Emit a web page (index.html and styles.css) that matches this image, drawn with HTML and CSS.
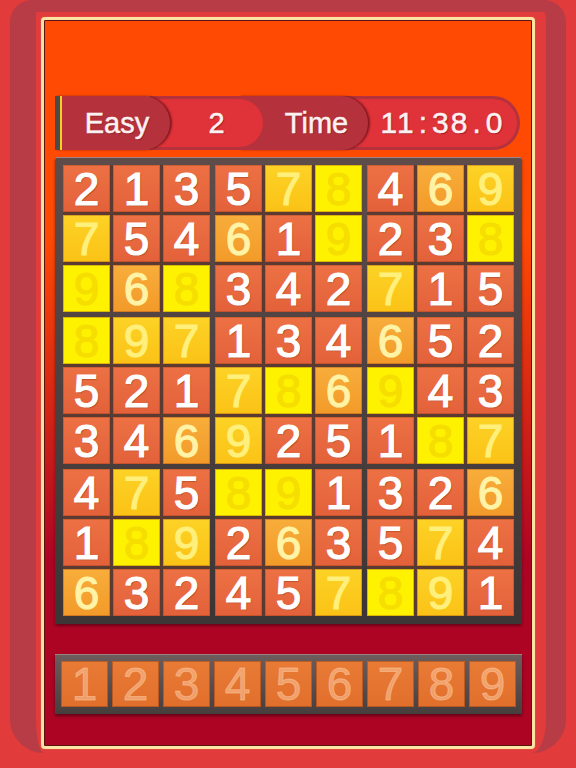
FILE: index.html
```html
<!DOCTYPE html>
<html>
<head>
<meta charset="utf-8">
<link rel="stylesheet" href="styles.css">
</head>
<body>
<div class="screen">
  <div class="ring">
    <div class="panel">
      <div class="infobar">
        <div class="seg label first">Easy</div>
        <div class="seg value v1">2</div>
        <div class="seg label second">Time</div>
        <div class="seg value v2">11<span class="sep">:</span>38<span class="sep">.</span>0</div>
      </div>
      <div class="board">
        <div class="block">
          <div class="cell w">2</div><div class="cell w">1</div><div class="cell w">3</div>
          <div class="cell g">7</div><div class="cell w">5</div><div class="cell w">4</div>
          <div class="cell y">9</div><div class="cell a">6</div><div class="cell y">8</div>
        </div>
        <div class="block">
          <div class="cell w">5</div><div class="cell g">7</div><div class="cell y">8</div>
          <div class="cell a">6</div><div class="cell w">1</div><div class="cell y">9</div>
          <div class="cell w">3</div><div class="cell w">4</div><div class="cell w">2</div>
        </div>
        <div class="block">
          <div class="cell w">4</div><div class="cell a">6</div><div class="cell g">9</div>
          <div class="cell w">2</div><div class="cell w">3</div><div class="cell y">8</div>
          <div class="cell g">7</div><div class="cell w">1</div><div class="cell w">5</div>
        </div>
        <div class="block">
          <div class="cell y">8</div><div class="cell g">9</div><div class="cell g">7</div>
          <div class="cell w">5</div><div class="cell w">2</div><div class="cell w">1</div>
          <div class="cell w">3</div><div class="cell w">4</div><div class="cell a">6</div>
        </div>
        <div class="block">
          <div class="cell w">1</div><div class="cell w">3</div><div class="cell w">4</div>
          <div class="cell g">7</div><div class="cell y">8</div><div class="cell a">6</div>
          <div class="cell g">9</div><div class="cell w">2</div><div class="cell w">5</div>
        </div>
        <div class="block">
          <div class="cell a">6</div><div class="cell w">5</div><div class="cell w">2</div>
          <div class="cell y">9</div><div class="cell w">4</div><div class="cell w">3</div>
          <div class="cell w">1</div><div class="cell y">8</div><div class="cell g">7</div>
        </div>
        <div class="block">
          <div class="cell w">4</div><div class="cell g">7</div><div class="cell w">5</div>
          <div class="cell w">1</div><div class="cell y">8</div><div class="cell g">9</div>
          <div class="cell a">6</div><div class="cell w">3</div><div class="cell w">2</div>
        </div>
        <div class="block">
          <div class="cell y">8</div><div class="cell y">9</div><div class="cell w">1</div>
          <div class="cell w">2</div><div class="cell a">6</div><div class="cell w">3</div>
          <div class="cell w">4</div><div class="cell w">5</div><div class="cell g">7</div>
        </div>
        <div class="block">
          <div class="cell w">3</div><div class="cell w">2</div><div class="cell a">6</div>
          <div class="cell w">5</div><div class="cell g">7</div><div class="cell w">4</div>
          <div class="cell y">8</div><div class="cell g">9</div><div class="cell w">1</div>
        </div>
      </div>
      <div class="pad">
        <div class="key">1</div><div class="key">2</div><div class="key">3</div>
        <div class="key">4</div><div class="key">5</div><div class="key">6</div>
        <div class="key">7</div><div class="key">8</div><div class="key">9</div>
      </div>
    </div>
  </div>
</div>
</body>
</html>
```
FILE: styles.css
```css
* { box-sizing: border-box; }
html, body { margin: 0; padding: 0; }
body {
  width: 576px;
  height: 768px;
  overflow: hidden;
  background: #e23b3b;
  font-family: "Liberation Sans", Arial, sans-serif;
}
.screen {
  height: 768px;
  padding: 0 10px;
}
.ring {
  border-style: solid;
  border-color: #b73c45;
  border-width: 12px 20px 0 26px;
  border-radius: 22px 22px 34px 34px;
  padding: 5px 11px 4px 5px;
}
.panel {
  width: 494px;
  border: 3px solid #fbe3a3;
  border-radius: 4px;
  padding: 76px 9px 32px 11px;
  background: linear-gradient(180deg, #ff4a04 0px, #ff4a04 215px, #ae0424 540px, #ae0424 100%);
  box-shadow: inset 0 0 0 1px #5a1410, 0 0 1px #f3b060;
}

/* info bar */
.infobar {
  display: flex;
  align-items: center;
  height: 54px;
  margin-right: 3px;
  padding-right: 3px;
  background: #b5323c;
  border-radius: 0 27px 27px 0;
  color: #fbf1f1;
  text-shadow: 1px 1px 1px rgba(90, 0, 10, 0.45);
  -webkit-text-stroke: 0.5px currentColor;
}
.seg {
  position: relative;
  display: flex;
  align-items: center;
  justify-content: center;
}
.label {
  height: 54px;
  background: #b5323c;
  border-radius: 0 27px 27px 0;
  box-shadow: 2px 0 2px rgba(60, 0, 10, 0.55);
  font-size: 29px;
}
.label.first {
  z-index: 4;
  width: 115px;
  border-left: 5px solid #4d4a4a;
  box-shadow: inset 2px 0 0 #f4d11e, 2px 0 2px rgba(60, 0, 10, 0.55);
  padding-left: 4px;
}
.label.second {
  z-index: 2;
  width: 129px;
  margin-left: -24px;
  padding-left: 26px;
}
.value {
  height: 48px;
  background: #df3239;
  border-radius: 0 24px 24px 0;
  font-size: 29px;
}
.value.v1 {
  z-index: 3;
  width: 120px;
  margin-left: -27px;
  padding-left: 27px;
}
.value.v2 {
  z-index: 1;
  flex: 1;
  margin-left: -27px;
  padding-left: 27px;
  font-size: 30px;
  letter-spacing: 2px;
}
.sep {
  margin: 0 3px;
}

/* board */
.board {
  margin-top: 7px;
  width: 467px;
  padding: 8px;
  display: grid;
  grid-template-columns: repeat(3, 147px);
  gap: 5px;
  background: linear-gradient(180deg, #5e4c4a, #3c3535);
  border-radius: 2px;
  box-shadow: inset 0 1px 0 #a58580, 0 2px 3px rgba(0, 0, 0, 0.4);
}
.block {
  display: grid;
  grid-template-columns: repeat(3, 47px);
  grid-auto-rows: 47px;
  gap: 3px;
  background: #5b3a32;
}
.cell {
  display: flex;
  align-items: center;
  justify-content: center;
  font-size: 46px;
  line-height: 1;
  -webkit-text-stroke: 1.2px currentColor;
  box-shadow: inset 0 0 0 1px rgba(140, 50, 10, 0.3);
}
.cell.w {
  background: linear-gradient(180deg, #ed7144, #e3613a);
  color: #ffffff;
  text-shadow: 1px 1px 1px rgba(110, 30, 0, 0.55);
}
.cell.a {
  background: linear-gradient(180deg, #f8ad3a, #f29a2a);
  color: #fff3a6;
}
.cell.g {
  background: linear-gradient(180deg, #fdd226, #fbc216);
  color: #fff07c;
}
.cell.y {
  background: #fff200;
  color: #f5de00;
}

/* number pad */
.pad {
  margin-top: 30px;
  width: 467px;
  display: flex;
  gap: 4px;
  padding: 7px 6px;
  background: linear-gradient(180deg, #6d5d5c, #463e3e);
  box-shadow: inset 0 1px 0 #9a8480, 0 2px 3px rgba(0, 0, 0, 0.45);
}
.key {
  width: 47px;
  height: 46px;
  display: flex;
  align-items: center;
  justify-content: center;
  font-size: 46px;
  line-height: 1;
  -webkit-text-stroke: 1px currentColor;
  background: linear-gradient(180deg, #e97b35, #e06f2c);
  color: rgba(255, 205, 165, 0.5);
  box-shadow: inset 0 0 0 1px rgba(110, 40, 10, 0.35);
}
```
